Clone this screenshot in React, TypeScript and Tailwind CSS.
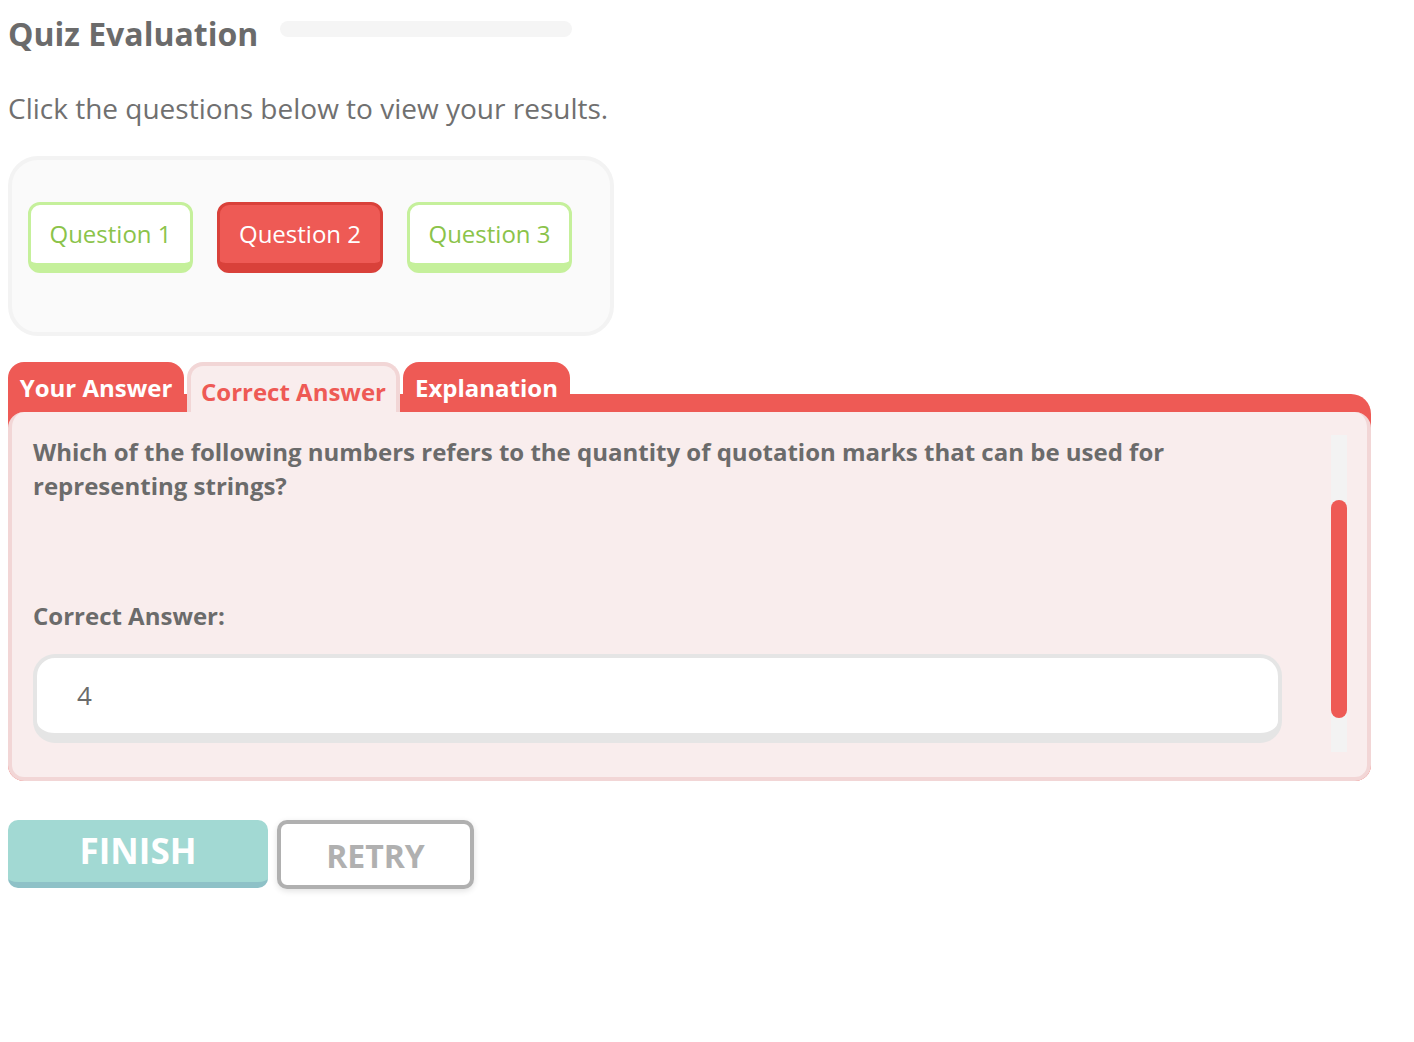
import React from "react"

const questions = [
  { label: "Question 1", wrong: false },
  { label: "Question 2", wrong: true },
  { label: "Question 3", wrong: false },
]

export default function App() {
  return (
    <div className="min-h-screen bg-white px-2 pt-[12px] text-[#6e6e6e]" style={{ fontFamily: "'Open Sans', 'Noto Sans', sans-serif" }}>
      {/* title + progress */}
      <div className="flex items-start gap-[22px]">
        <h1 className="text-[32px] font-bold leading-[44px] text-[#6b6b6b]">Quiz Evaluation</h1>
        <div className="mt-[9px] h-[16px] w-[292px] rounded-full bg-[#f5f5f5]" />
      </div>

      <p className="mt-[33px] text-[28px] leading-[38px] text-[#707070]">Click the questions below to view your results.</p>

      {/* question picker */}
      <div className="mt-[29px] h-[180px] w-[606px] rounded-[30px] border-4 border-[#f3f3f3] bg-[#fafafa] pl-[16px] pt-[42px]">
        <div className="flex gap-[24px]">
          {questions.map((q) =>
            q.wrong ? (
              <button
                key={q.label}
                className="h-[71px] w-[166px] rounded-[12px] border-[3px] border-b-[10px] border-[#d9413a] bg-[#ee5a55] text-[24px] text-white"
              >
                {q.label}
              </button>
            ) : (
              <button
                key={q.label}
                className="h-[71px] w-[165px] rounded-[12px] border-[3px] border-b-[10px] border-[#c5f09b] bg-white text-[24px] text-[#8bc34a]"
              >
                {q.label}
              </button>
            )
          )}
        </div>
      </div>

      {/* tabs */}
      <div className="mt-[26px] w-[1363px]">
        <div className="relative z-10 flex h-[50px] items-stretch gap-[3px]">
          <div className="flex w-[176px] items-start justify-center rounded-t-[16px] bg-[#ee5a55] pt-[9px] text-[24px] font-bold leading-[34px] text-white">
            Your Answer
          </div>
          <div className="flex w-[213px] items-start justify-center rounded-t-[16px] border-4 border-b-0 border-[#f2d6d6] bg-[#f9eded] pt-[9px] text-[24px] font-bold leading-[34px] text-[#ee5a55]">
            Correct Answer
          </div>
          <div className="flex w-[167px] items-start justify-center rounded-t-[16px] bg-[#ee5a55] pt-[9px] text-[24px] font-bold leading-[34px] text-white">
            Explanation
          </div>
        </div>
        <div className="-mt-[18px] rounded-tr-[20px] rounded-b-[16px] bg-[#ee5a55] pt-[18px]">
          <div className="flex h-[369px] rounded-[16px] border-4 border-t-0 border-[#f2d6d6] bg-[#f9eded] pl-[21px] pr-[20px] pt-[23px]">
            <div className="flex-1">
              <p className="w-[1180px] text-[24px] font-bold leading-[34px] text-[#6b6b6b]">
                Which of the following numbers refers to the quantity of quotation marks that can be used for representing strings?
              </p>
              <p className="mt-[96px] text-[24px] font-bold leading-[34px] text-[#6b6b6b]">Correct Answer:</p>
              <div className="mt-[21px] flex h-[89px] w-[1249px] items-center rounded-[22px] border-4 border-b-[10px] border-[#e5e5e5] bg-white pl-[40px] text-[26px] text-[#6b6b6b]">
                4
              </div>
            </div>
            <div className="ml-[30px] h-[317px] w-[16px] bg-[#f3f3f3]">
              <div className="mt-[65px] h-[218px] rounded-full bg-[#ee5a55]" />
            </div>
          </div>
        </div>
      </div>

      {/* actions */}
      <div className="mt-[39px] flex gap-[9px]">
        <button className="h-[68px] w-[260px] rounded-[10px] border-b-[6px] border-[#8ec1c7] bg-[#a2d9d3] text-[35px] font-bold text-white">
          FINISH
        </button>
        <button className="h-[69px] w-[197px] rounded-[10px] border-4 border-[#b0b0b0] bg-white pt-[2px] text-[32px] font-bold text-[#b0b0b0] shadow-[0_2px_6px_rgba(0,0,0,0.12)]">
          RETRY
        </button>
      </div>
    </div>
  )
}
